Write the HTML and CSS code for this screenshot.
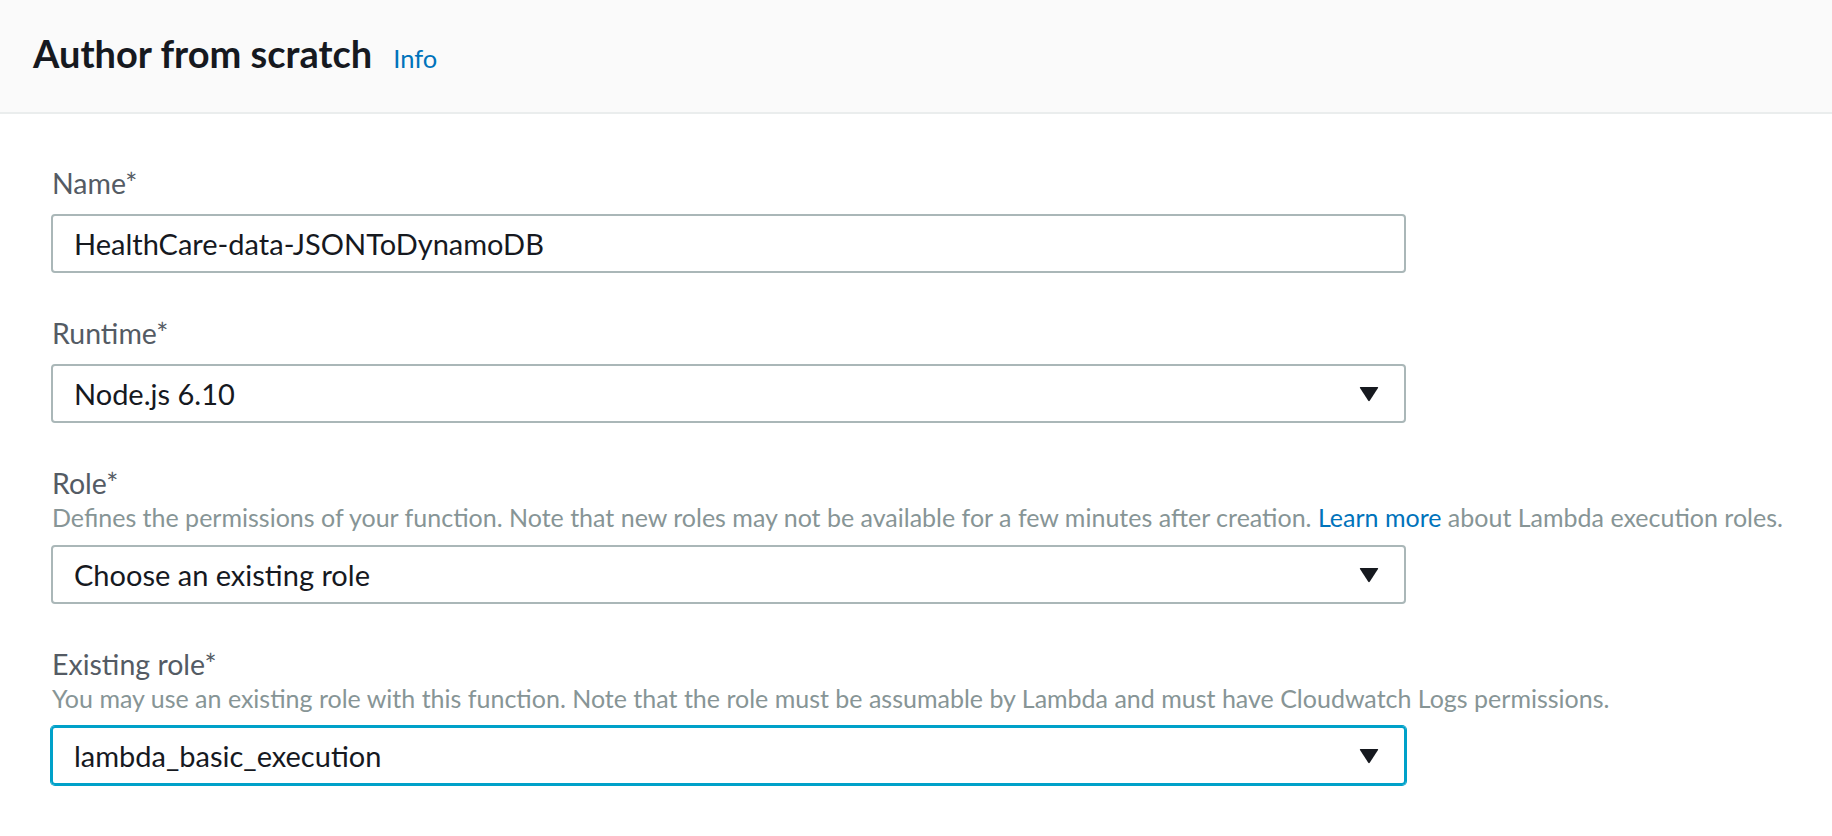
FILE: index.html
```html
<!DOCTYPE html>
<html lang="en">
<head>
<meta charset="utf-8">
<title>Author from scratch</title>
<link rel="stylesheet" href="styles.css">
</head>
<body>
<div class="panel">
  <div class="panel-header">
    <h2 class="panel-title">Author from scratch</h2>
    <a class="info-link" href="#">Info</a>
  </div>
  <div class="panel-body">
    <div class="field">
      <div class="field-label">Name*</div>
      <div class="control">
        <span class="control-value">HealthCare-data-JSONToDynamoDB</span>
      </div>
    </div>
    <div class="field">
      <div class="field-label">Runtime*</div>
      <div class="control select">
        <span class="control-value">Node.js 6.10</span>
        <svg class="caret" width="20" height="16" viewBox="0 0 20 16"><path d="M1.5 1 H18.5 Q19.6 1 19 2 L10.9 14.6 Q10 15.8 9.1 14.6 L1 2 Q0.4 1 1.5 1 Z" fill="#16191f"/></svg>
      </div>
    </div>
    <div class="field">
      <div class="field-label">Role*</div>
      <div class="field-help">Defines the permissions of your function. Note that new roles may not be available for a few minutes after creation. <a class="help-link" href="#">Learn more</a> about Lambda execution roles.</div>
      <div class="control select">
        <span class="control-value">Choose an existing role</span>
        <svg class="caret" width="20" height="16" viewBox="0 0 20 16"><path d="M1.5 1 H18.5 Q19.6 1 19 2 L10.9 14.6 Q10 15.8 9.1 14.6 L1 2 Q0.4 1 1.5 1 Z" fill="#16191f"/></svg>
      </div>
    </div>
    <div class="field">
      <div class="field-label">Existing role*</div>
      <div class="field-help">You may use an existing role with this function. Note that the role must be assumable by Lambda and must have Cloudwatch Logs permissions.</div>
      <div class="control select focused">
        <span class="control-value">lambda_basic_execution</span>
        <svg class="caret" width="20" height="16" viewBox="0 0 20 16"><path d="M1.5 1 H18.5 Q19.6 1 19 2 L10.9 14.6 Q10 15.8 9.1 14.6 L1 2 Q0.4 1 1.5 1 Z" fill="#16191f"/></svg>
      </div>
    </div>
  </div>
</div>
</body>
</html>
```

FILE: styles.css
```css
html, body {
  margin: 0;
  padding: 0;
  background: #ffffff;
}

body {
  font-family: "Lato", "Liberation Sans", sans-serif;
  color: #16191f;
  width: 1832px;
  height: 836px;
  overflow: hidden;
}

.panel-header {
  box-sizing: border-box;
  height: 114px;
  padding: 32px 33px 0;
  background: #fafafa;
  border-bottom: 2px solid #eaeded;
  display: flex;
  align-items: baseline;
  gap: 21px;
}

.panel-title {
  margin: 0;
  font-size: 38px;
  line-height: 42px;
  font-weight: 700;
  color: #16191f;
}

.info-link {
  font-size: 25.5px;
  color: #0073bb;
  text-decoration: none;
}

.panel-body {
  padding: 52px 0 0 51px;
  display: flex;
  flex-direction: column;
  gap: 43px;
}

.field {
  display: flex;
  flex-direction: column;
}

.field-label {
  font-size: 28.5px;
  line-height: 34px;
  color: #545b64;
  padding-left: 1px;
}

.field-help {
  font-size: 25px;
  line-height: 34px;
  color: #879596;
  padding-left: 1px;
}

.help-link {
  color: #0073bb;
  text-decoration: none;
}

.control {
  box-sizing: border-box;
  margin-top: 14px;
  width: 1355px;
  height: 59px;
  border: 2px solid #aab7b8;
  border-radius: 4px;
  display: flex;
  align-items: center;
  padding: 0 25px 0 21px;
}

.field-help + .control {
  margin-top: 11px;
}

.control-value {
  flex: 1;
  font-size: 29px;
  color: #16191f;
}

.caret {
  flex: none;
  display: block;
}

.control.focused {
  border-color: #00a1c9;
  box-shadow: 0 0 0 1px #00a1c9;
}
```
